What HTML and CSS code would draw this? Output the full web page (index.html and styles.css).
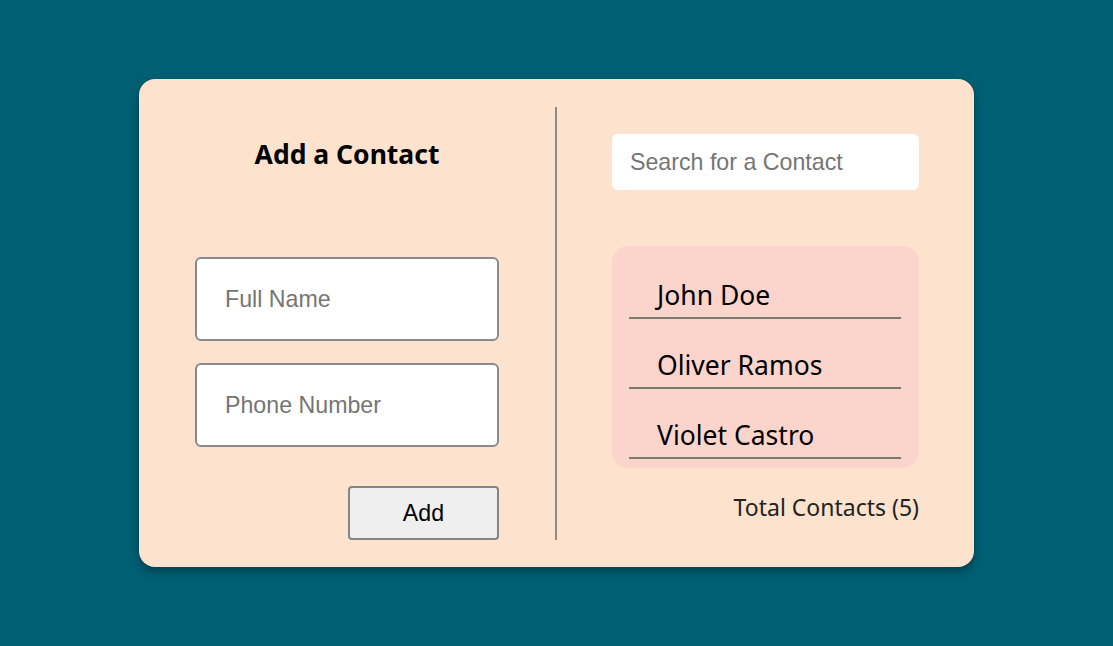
FILE: index.html
```html
<!DOCTYPE html>
<html lang="en">
<head>
<meta charset="utf-8">
<title>Contacts</title>
<link rel="stylesheet" href="styles.css">
</head>
<body>
<main class="card">
  <section class="add-col">
    <h2 class="title">Add a Contact</h2>
    <input class="field" type="text" placeholder="Full Name">
    <input class="field field-gap" type="text" placeholder="Phone Number">
    <button class="add-btn" type="button">Add</button>
  </section>
  <div class="divider"></div>
  <section class="list-col">
    <input class="search" type="text" placeholder="Search for a Contact">
    <div class="list-box">
      <ul class="contacts">
        <li class="contact">John Doe</li>
        <li class="contact">Oliver Ramos</li>
        <li class="contact">Violet Castro</li>
      </ul>
    </div>
    <p class="total">Total Contacts (5)</p>
  </section>
</main>
</body>
</html>
```
FILE: styles.css
```css
* { box-sizing: border-box; }
html, body { margin: 0; padding: 0; }
body {
  background: #005f73;
  width: 1113px;
  height: 646px;
  padding-top: 79px;
  padding-left: 139px;
  font-family: "Noto Sans", "Segoe UI", sans-serif;
}
.card {
  width: 835px;
  height: 488px;
  background: #fde3ce;
  border-radius: 16px;
  box-shadow: 0 4px 8px rgba(0, 0, 0, 0.35);
  display: flex;
  padding: 28px 0 27px;
}
.add-col {
  width: 416px;
  padding: 0 56px;
  display: flex;
  flex-direction: column;
  align-items: center;
}
.title {
  margin: 29px 0 0;
  font-size: 26.5px;
  line-height: 36px;
  font-weight: 700;
  color: #000;
}
.field {
  width: 100%;
  height: 84px;
  margin-top: 85px;
  border: 2px solid #8a8a8a;
  border-radius: 6px;
  background: #fff;
  padding: 0 0 0 28px;
  font-family: "Liberation Sans", Arial, sans-serif;
  font-size: 23.2px;
  color: #000;
  outline: none;
}
.field-gap { margin-top: 22px; }
.field::placeholder, .search::placeholder { color: #757575; }
.add-btn {
  align-self: flex-end;
  width: 151px;
  height: 54px;
  margin-top: 39px;
  background: #efefef;
  border: 2px solid #858585;
  border-radius: 4px;
  font-family: "Liberation Sans", Arial, sans-serif;
  font-size: 23.2px;
  color: #000;
}
.divider {
  width: 2px;
  background: #8f8a86;
}
.list-col {
  width: 417px;
  padding: 0 55px;
  display: flex;
  flex-direction: column;
}
.search {
  width: 100%;
  height: 56px;
  margin-top: 27px;
  border: none;
  border-radius: 6px;
  background: #fff;
  padding: 0 0 0 18px;
  font-family: "Liberation Sans", Arial, sans-serif;
  font-size: 23.2px;
  outline: none;
}
.list-box {
  margin-top: 56px;
  height: 222px;
  background: #fbd5cc;
  border-radius: 16px;
  padding: 3px 18px 9px 17px;
}
.contacts {
  list-style: none;
  margin: 0;
  padding: 0;
}
.contact {
  height: 70px;
  padding: 30px 0 0 28px;
  font-size: 26.5px;
  line-height: 32px;
  color: #000;
  border-bottom: 2px solid #7a7a6c;
}
.total {
  margin: 25px 0 0;
  text-align: right;
  font-size: 23px;
  line-height: 28px;
  color: #222;
}
```
